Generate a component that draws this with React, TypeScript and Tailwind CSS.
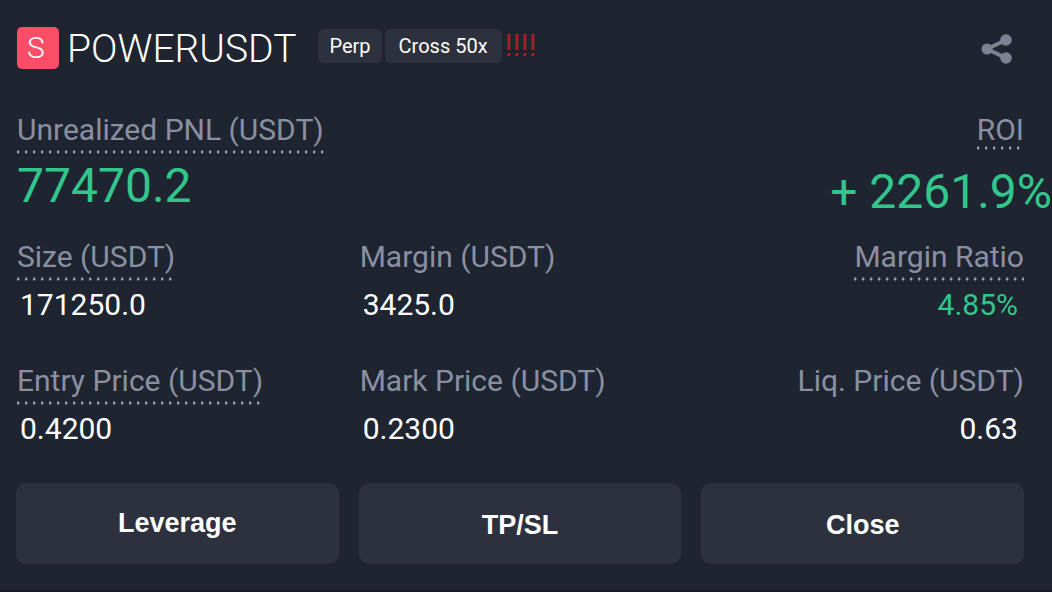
import React from "react";

const DOTS =
  "bg-[radial-gradient(circle_at_1px_2px,#9a9fae_1px,transparent_2px)] bg-[length:8px_4px] bg-repeat-x";

type StatProps = {
  label: string;
  value: string;
  dotted?: boolean;
  right?: boolean;
  green?: boolean;
};

function Label({ text, dotted, tight }: { text: string; dotted?: boolean; tight?: boolean }) {
  return (
    <dt className="w-fit text-[30px] leading-9 text-[#8a90a1]">
      {text}
      <span
        aria-hidden="true"
        className={`block h-1 ${tight ? "-mt-0.5 mb-1" : "mt-0.5"} ${dotted ? DOTS : ""}`}
      />
    </dt>
  );
}

function Stat({ label, value, dotted, right, green }: StatProps) {
  return (
    <dl
      className={`flex flex-col whitespace-nowrap ${right ? "items-end" : "items-start pl-px"}`}
    >
      <Label text={label} dotted={dotted} />
      <dd
        className={`mt-1 text-[30px] leading-10 ${right ? "pr-1.5" : "pl-[3px]"} ${green ? "text-[#32c68c]" : "text-white"}`}
      >
        {value}
      </dd>
    </dl>
  );
}

function ShareIcon() {
  return (
    <svg viewBox="0 0 32 30" className="h-[30px] w-8" aria-hidden="true">
      <path d="M25 6 6 15l19 9" fill="none" stroke="#7c8291" strokeWidth="4" />
      <circle cx="6" cy="15" r="5.5" fill="#7c8291" />
      <circle cx="25" cy="6" r="5.8" fill="#7c8291" />
      <circle cx="25" cy="24" r="5.8" fill="#7c8291" />
    </svg>
  );
}

export default function App() {
  return (
    <main className="min-h-screen border-b-2 border-[#181a25] bg-[#1e2430] pt-[23px] pr-7 pb-6 pl-4 font-['Roboto',sans-serif] text-white">
      <header className="flex items-center pl-px">
        <span className="flex size-[42px] items-center justify-center rounded-[5px] bg-[#f94d68] pr-1 text-[30px] leading-none font-light">
          S
        </span>
        <h1 className="ml-2 pt-0.5 text-[39px] leading-[48px] font-light whitespace-nowrap">
          POWERUSDT
        </h1>
        <div className="ml-[22px] flex items-center gap-[3px] pb-1 text-xl leading-[34px]">
          <span className="rounded-md bg-[#2c313d] px-[11px]">Perp</span>
          <span className="rounded-md bg-[#2c313d] px-3.5">Cross 50x</span>
          <span className="text-[31px] text-[#a81e28]">!!!!</span>
        </div>
        <button type="button" aria-label="Share" className="mt-0.5 mr-[11px] ml-auto">
          <ShareIcon />
        </button>
      </header>

      <div className="mt-[39px] flex justify-between whitespace-nowrap">
        <dl className="flex flex-col items-start pl-px">
          <Label text="Unrealized PNL (USDT)" dotted />
          <dd className="pt-0.5 text-[48px] leading-[60px] text-[#32c68c]">77470.2</dd>
        </dl>
        <dl className="flex flex-col items-end">
          <Label text="ROI" dotted tight />
          <dd className="-mr-7 pt-2 text-[48px] leading-[60px] text-[#32c68c]">+ 2261.9%</dd>
        </dl>
      </div>

      <section className="mt-[17px] grid grid-cols-3 gap-x-5 gap-y-[38px]">
        <Stat label="Size (USDT)" value="171250.0" dotted />
        <Stat label="Margin (USDT)" value="3425.0" />
        <Stat label="Margin Ratio" value="4.85%" dotted right green />
        <Stat label="Entry Price (USDT)" value="0.4200" dotted />
        <Stat label="Mark Price (USDT)" value="0.2300" />
        <Stat label="Liq. Price (USDT)" value="0.63" right />
      </section>

      <div className="mt-[34px] grid grid-cols-3 gap-5 font-['Liberation_Sans',sans-serif] text-[27px] font-bold">
        <button type="button" className="h-[81px] rounded-[10px] bg-[#2c313d]">Leverage</button>
        <button type="button" className="h-[81px] rounded-[10px] bg-[#2c313d] pt-1">TP/SL</button>
        <button type="button" className="h-[81px] rounded-[10px] bg-[#2c313d] pt-1">Close</button>
      </div>
    </main>
  );
}
